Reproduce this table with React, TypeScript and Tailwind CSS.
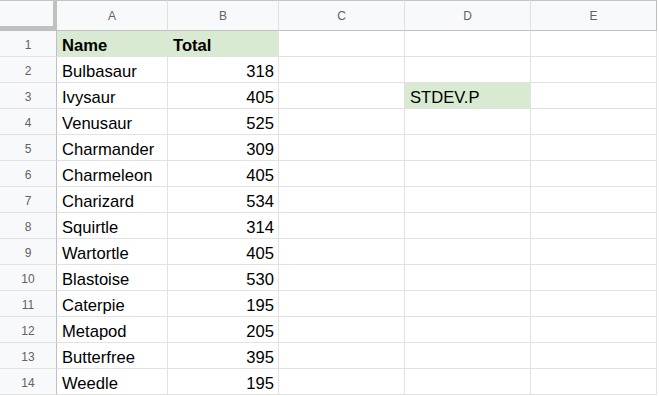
const cols = ["A", "B", "C", "D", "E"];
const widths = ["w-[111px]", "w-[111px]", "w-[126px]", "w-[126px]", "w-[126px]"];

const rows: [string, string][] = [
  ["Name", "Total"],
  ["Bulbasaur", "318"],
  ["Ivysaur", "405"],
  ["Venusaur", "525"],
  ["Charmander", "309"],
  ["Charmeleon", "405"],
  ["Charizard", "534"],
  ["Squirtle", "314"],
  ["Wartortle", "405"],
  ["Blastoise", "530"],
  ["Caterpie", "195"],
  ["Metapod", "205"],
  ["Butterfree", "395"],
  ["Weedle", "195"],
];

export default function App() {
  return (
    <div className="w-[659px] h-[396px] overflow-hidden bg-white font-['Liberation_Sans',Arial,sans-serif] text-black">
      {/* column header */}
      <div className="flex h-[31px]">
        <div className="w-[57px] h-[31px] shrink-0 border-t border-[#c4c4c4] bg-[#f8f9fa]">
          <div className="h-[30px] w-[57px] border-r-4 border-b-[5px] border-[#c0c0c0]" />
        </div>
        {cols.map((c, i) => (
          <div
            key={c}
            className={`${widths[i]} shrink-0 flex items-center justify-center pt-[1px] border-t border-b border-r border-t-[#c4c4c4] border-b-[#c0c0c0] border-r-[#e0e0e0] bg-[#f8f9fa] text-[12px] text-[#5f6368] last:border-r-[#bdbdbd]`}
          >
            {c}
          </div>
        ))}
      </div>

      {rows.map(([name, total], r) => {
        const head = r === 0;
        return (
          <div key={r} className="flex h-[26px]">
            <div className="w-[57px] shrink-0 flex items-center justify-center pt-[2px] border-r border-b border-r-[#c0c0c0] border-b-[#e2e2e2] bg-[#f8f9fa] text-[12px] text-[#5f6368]">
              {r + 1}
            </div>
            <div
              className={`w-[111px] shrink-0 flex items-center pl-[5px] pt-[5px] border-r border-b border-[#e2e2e2] text-[16.6px] ${
                head ? "bg-[#d9ead3] font-bold" : ""
              }`}
            >
              {name}
            </div>
            <div
              className={`w-[111px] shrink-0 flex items-center pt-[5px] border-r border-b border-[#e2e2e2] text-[16.6px] ${
                head ? "bg-[#d9ead3] font-bold pl-[5px]" : "justify-end pr-[4px]"
              }`}
            >
              {total}
            </div>
            <div className="w-[126px] shrink-0 border-r border-b border-[#e2e2e2]" />
            <div
              className={`w-[126px] shrink-0 flex items-center pl-[5px] pt-[5px] border-r border-b border-[#e2e2e2] text-[16.6px] ${
                r === 2 ? "bg-[#d9ead3]" : ""
              }`}
            >
              {r === 2 ? "STDEV.P" : ""}
            </div>
            <div className="w-[126px] shrink-0 border-r border-b border-[#e2e2e2]" />
          </div>
        );
      })}
    </div>
  );
}
